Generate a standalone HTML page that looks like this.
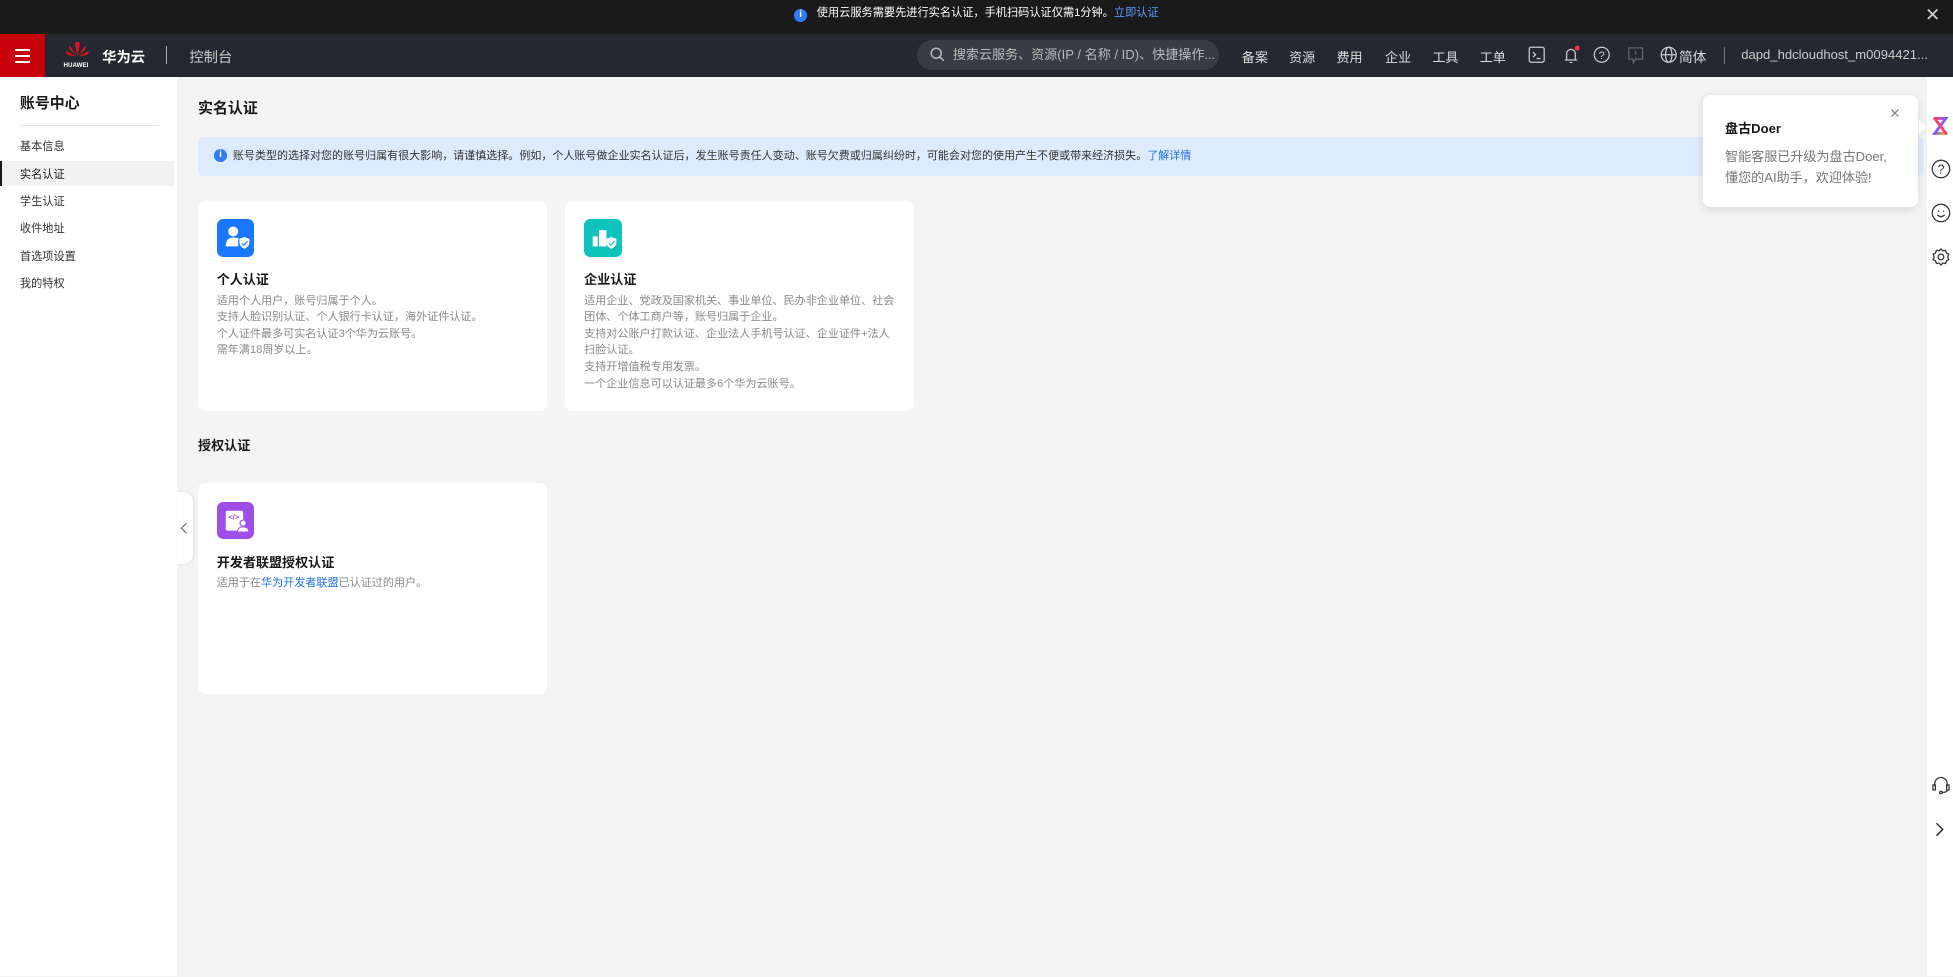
<!DOCTYPE html>
<html><head><meta charset="utf-8">
<style>
html{zoom:1.24554}
*{box-sizing:border-box;margin:0;padding:0}
body{width:1568px;height:784px;overflow:hidden;background:#f4f4f4;font-family:"Liberation Sans","Noto Sans CJK SC",sans-serif;color:#191919;position:relative}
.abs{position:absolute;white-space:nowrap}
.banner{left:0;top:0;width:1568px;height:27px;background:#1a1a1a;color:#fff;font-size:9px;text-align:center;line-height:22px}
.banner a{color:#5b9bff;text-decoration:none}
.nav{left:0;top:27px;width:1568px;height:35px;background:#252831;color:#dcdcdc;font-size:10.5px}
.menu{left:0;top:0;width:36px;height:35px;background:#c7000b}
.menu i{position:absolute;left:12px;width:12px;height:1.6px;background:#fff}
.side{left:0;top:62px;width:142px;height:722px;background:#fff}
.side .it{position:absolute;left:16px;font-size:9px;color:#333}
.card{background:#fff;border-radius:6px}
.ic{position:absolute;left:15px;top:15px;width:30px;height:30px;border-radius:5px}
.ct{position:absolute;left:15px;top:55px;font-size:10.5px;font-weight:bold;color:#191919}
.cd{position:absolute;left:15px;top:74px;font-size:8.9px;color:#8a8a8a;line-height:13.3px;white-space:nowrap}
.rs{left:1547px;top:62px;width:21px;height:722px;background:#fff}
</style></head><body>
<div class="abs banner"><span style="display:inline-block;width:10px;height:10px;border-radius:50%;background:#2f7df6;color:#fff;font-size:8px;line-height:10px;font-weight:bold;vertical-align:-1px;margin-right:8px">i</span>使用云服务需要先进行实名认证，手机扫码认证仅需1分钟。<a>立即认证</a></div>
<div class="abs" style="right:10px;top:3px;color:#ccc;font-size:15px">✕</div>
<div class="abs nav">
 <div class="abs menu"><i style="top:12px"></i><i style="top:17px"></i><i style="top:22px"></i></div>
 <svg class="abs" style="left:52px;top:6px" width="20" height="16" viewBox="0 0 20 16"><g fill="#e1141c"><path d="M10 12 L8 2 Q9 0 10 1Z"/><path d="M10 12 L12 2 Q11 0 10 1Z"/><path d="M9.5 12 L4 4 Q3 5 4 7Z"/><path d="M10.5 12 L16 4 Q17 5 16 7Z"/><path d="M9 12.5 L1 8 Q1 10 2 11Z"/><path d="M11 12.5 L19 8 Q19 10 18 11Z"/></g></svg>
 <div class="abs" style="left:51px;top:23px;font-size:5px;color:#fff;font-weight:bold">HUAWEI</div>
 <div class="abs" style="left:82px;top:10px;font-size:11.5px;color:#fff;font-weight:bold">华为云</div>
 <div class="abs" style="left:133px;top:10px;width:1px;height:14px;background:#aaa"></div>
 <div class="abs" style="left:152px;top:10px;font-size:11.5px;color:#ccc">控制台</div>
 <div class="abs" style="left:736px;top:5px;width:243px;height:24px;border-radius:12px;background:#393c45;color:#bbb;font-size:10.5px;line-height:24px;padding-left:29px;overflow:hidden">搜索云服务、资源(IP / 名称 / ID)、快捷操作...</div>
 <svg class="abs" style="left:747px;top:11px" width="12" height="12"><circle cx="5" cy="5" r="4" fill="none" stroke="#bbb" stroke-width="1.2"/><path d="M8 8l3 3" stroke="#bbb" stroke-width="1.2"/></svg>
 <div class="abs" style="left:997px;top:11px">备案</div>
 <div class="abs" style="left:1035px;top:11px">资源</div>
 <div class="abs" style="left:1073px;top:11px">费用</div>
 <div class="abs" style="left:1112px;top:11px">企业</div>
 <div class="abs" style="left:1150px;top:11px">工具</div>
 <div class="abs" style="left:1188px;top:11px">工单</div>
 <svg class="abs" style="left:1227px;top:10px" width="14" height="14"><rect x="1" y="1" width="12" height="12" rx="1.5" fill="none" stroke="#ccc"/><path d="M4 5l2 2-2 2M7 10h3" stroke="#ccc" fill="none"/></svg>
 <svg class="abs" style="left:1253px;top:9px" width="16" height="16"><path d="M3 12h10M4.5 12V7a3.5 3.5 0 0 1 7 0v5M7 14h2" stroke="#ccc" fill="none"/><circle cx="13" cy="2.5" r="2" fill="#f33"/></svg>
 <svg class="abs" style="left:1279px;top:10px" width="14" height="14"><circle cx="7" cy="7" r="6" fill="none" stroke="#ccc"/><text x="7" y="10.5" font-size="9" fill="#ccc" text-anchor="middle" font-family="Liberation Sans">?</text></svg>
 <svg class="abs" style="left:1306px;top:10px" width="14" height="15"><path d="M1.5 1.5h11v9H7l-2 3v-3H1.5z" fill="none" stroke="#666"/><path d="M7 4v3M7 8.5v.8" stroke="#666"/></svg>
 <svg class="abs" style="left:1333px;top:10px" width="14" height="14" fill="none" stroke="#ccc"><circle cx="7" cy="7" r="6"/><ellipse cx="7" cy="7" rx="2.6" ry="6"/><path d="M1 7h12"/></svg>
 <div class="abs" style="left:1348px;top:10px;font-size:11px">简体</div>
 <div class="abs" style="left:1384px;top:11px;width:1px;height:13px;background:#777"></div>
 <div class="abs" style="left:1398px;top:11px;font-size:10.5px;color:#ccc">dapd_hdcloudhost_m0094421...</div>
</div>
<div class="abs side">
 <div class="abs" style="left:16px;top:12px;font-size:12px;font-weight:bold">账号中心</div>
 <div class="abs" style="left:16px;top:38px;width:112px;height:1px;background:#e5e5e5"></div>
 <div class="it" style="top:49px">基本信息</div>
 <div class="abs" style="left:0;top:67px;width:140px;height:20px;background:#f2f2f2;border-left:2px solid #191919"></div>
 <div class="it" style="top:71px;color:#191919">实名认证</div>
 <div class="it" style="top:93px">学生认证</div>
 <div class="it" style="top:115px">收件地址</div>
 <div class="it" style="top:137px">首选项设置</div>
 <div class="it" style="top:159px">我的特权</div>
</div>
<div class="abs" style="left:142px;top:395px;width:13px;height:58px;background:#fff;border-radius:0 8px 8px 0;box-shadow:1px 0 3px rgba(0,0,0,.08)"><svg style="position:absolute;left:2px;top:24px" width="8" height="10"><path d="M6 1L2 5l4 4" stroke="#777" fill="none"/></svg></div>
<div class="abs" style="left:159px;top:78px;font-size:12px;font-weight:bold">实名认证</div>
<div class="abs" style="left:159px;top:110px;width:1386px;height:31px;background:#deebff;border-radius:4px;font-size:8.85px;color:#333;line-height:31px;padding-left:28px">账号类型的选择对您的账号归属有很大影响，请谨慎选择。例如，个人账号做企业实名认证后，发生账号责任人变动、账号欠费或归属纠纷时，可能会对您的使用产生不便或带来经济损失。<span style="color:#1f6fe8">了解详情</span>
 <span style="position:absolute;left:13px;top:10px;width:10px;height:10px;border-radius:50%;background:#2f7df6;color:#fff;font-size:8px;line-height:10px;text-align:center;font-weight:bold">i</span></div>
<div class="abs card" style="left:159px;top:161px;width:280px;height:169px">
 <div class="ic" style="background:#1a77ff"><svg width="30" height="30"><circle cx="13" cy="10" r="4" fill="#fff"/><path d="M7 22q0-7 6-7t4 2v5z" fill="#fff"/><path d="M18 16l4-1.5 4 1.5v3q0 3-4 5-4-2-4-5z" fill="#fff"/><path d="M20 19.5l1.5 1.5 3-3" stroke="#1a77ff" fill="none"/></svg></div>
 <div class="ct">个人认证</div>
 <div class="cd">适用个人用户，账号归属于个人。<br>支持人脸识别认证、个人银行卡认证，海外证件认证。<br>个人证件最多可实名认证3个华为云账号。<br>需年满18周岁以上。</div>
</div>
<div class="abs card" style="left:454px;top:161px;width:280px;height:169px">
 <div class="ic" style="background:#0fc3bd"><svg width="30" height="30"><rect x="7" y="14" width="4" height="8" fill="#fff"/><rect x="12" y="9" width="6" height="13" fill="#fff"/><path d="M18 16l4-1.5 4 1.5v3q0 3-4 5-4-2-4-5z" fill="#fff"/><path d="M20 19.5l1.5 1.5 3-3" stroke="#0fc3bd" fill="none"/></svg></div>
 <div class="ct">企业认证</div>
 <div class="cd">适用企业、党政及国家机关、事业单位、民办非企业单位、社会<br>团体、个体工商户等，账号归属于企业。<br>支持对公账户打款认证、企业法人手机号认证、企业证件+法人<br>扫脸认证。<br>支持开增值税专用发票。<br>一个企业信息可以认证最多6个华为云账号。</div>
</div>
<div class="abs" style="left:159px;top:349px;font-size:10.5px;font-weight:bold">授权认证</div>
<div class="abs card" style="left:159px;top:388px;width:280px;height:169px">
 <div class="ic" style="background:#a04ee8"><svg width="30" height="30"><rect x="7" y="7" width="14" height="16" rx="1.5" fill="#fff"/><text x="13.5" y="14" font-size="6" fill="#a04ee8" text-anchor="middle" font-family="Liberation Sans" font-weight="bold">&lt;/&gt;</text><circle cx="21" cy="17" r="2.5" fill="#fff" stroke="#a04ee8"/><path d="M16.5 24q0-4 4.5-4t4.5 4z" fill="#fff" stroke="#a04ee8" stroke-width=".7"/></svg></div>
 <div class="ct">开发者联盟授权认证</div>
 <div class="cd">适用于在<span style="color:#1f6fe8">华为开发者联盟</span>已认证过的用户。</div>
</div>
<div class="abs rs">
 <svg style="position:absolute;left:3px;top:31px" width="15" height="16"><path d="M3 2h9L3 14h9" stroke="url(#g)" stroke-width="2.3" fill="none" stroke-linecap="round"/><path d="M3 2L12 14" stroke="#ff3d6b" stroke-width="2.3" stroke-linecap="round"/><defs><linearGradient id="g" x1="0" y1="0" x2="1" y2="1"><stop offset="0" stop-color="#ff3d6b"/><stop offset=".5" stop-color="#7a5cff"/><stop offset="1" stop-color="#ffb400"/></linearGradient></defs></svg>
 <svg style="position:absolute;left:3px;top:66px" width="16" height="16"><circle cx="8" cy="8" r="7" fill="none" stroke="#333"/><text x="8" y="11.5" font-size="10" text-anchor="middle" fill="#333" font-family="Liberation Sans">?</text></svg>
 <svg style="position:absolute;left:3px;top:101px" width="16" height="16" fill="none" stroke="#333"><circle cx="8" cy="8" r="7"/><path d="M5 9.5q3 3 6 0"/><path d="M6 6v1M10 6v1"/></svg>
 <svg style="position:absolute;left:3px;top:136px" width="16" height="16" fill="none" stroke="#333"><circle cx="8" cy="8" r="2.3"/><path d="M8 1.5l1.5 1.6 2.2-.4.6 2.1 2 1-.9 2.2.9 2.2-2 1-.6 2.1-2.2-.4L8 14.5l-1.5-1.6-2.2.4-.6-2.1-2-1 .9-2.2-.9-2.2 2-1 .6-2.1 2.2.4z"/></svg>
 <svg style="position:absolute;left:3px;top:560px" width="16" height="16" fill="none" stroke="#333"><path d="M3 9V7a5 5 0 0 1 10 0v2"/><rect x="1.5" y="8" width="2" height="4"/><rect x="12.5" y="8" width="2" height="4"/><path d="M13 12q0 2-4 2"/><circle cx="8" cy="14" r="1"/></svg>
 <svg style="position:absolute;left:6px;top:598px" width="10" height="12"><path d="M2 1l5 5-5 5" stroke="#333" fill="none" stroke-width="1.2"/></svg>
</div>
<div class="abs" style="left:1367px;top:76px;width:173px;height:90px;background:#fff;border-radius:6px;box-shadow:0 2px 8px rgba(0,0,0,.12)">
 <div class="abs" style="left:18px;top:19px;font-size:10.5px;font-weight:bold">盘古Doer</div>
 <div class="abs" style="right:14px;top:9px;font-size:11px;color:#888">✕</div>
 <div class="abs" style="left:18px;top:41px;font-size:10.5px;color:#777;line-height:17px">智能客服已升级为盘古Doer,<br>懂您的AI助手，欢迎体验!</div>
 <div class="abs" style="right:-6px;top:20px;width:0;height:0;border-top:6px solid transparent;border-bottom:6px solid transparent;border-left:6px solid #fff"></div>
</div>
</body></html>
